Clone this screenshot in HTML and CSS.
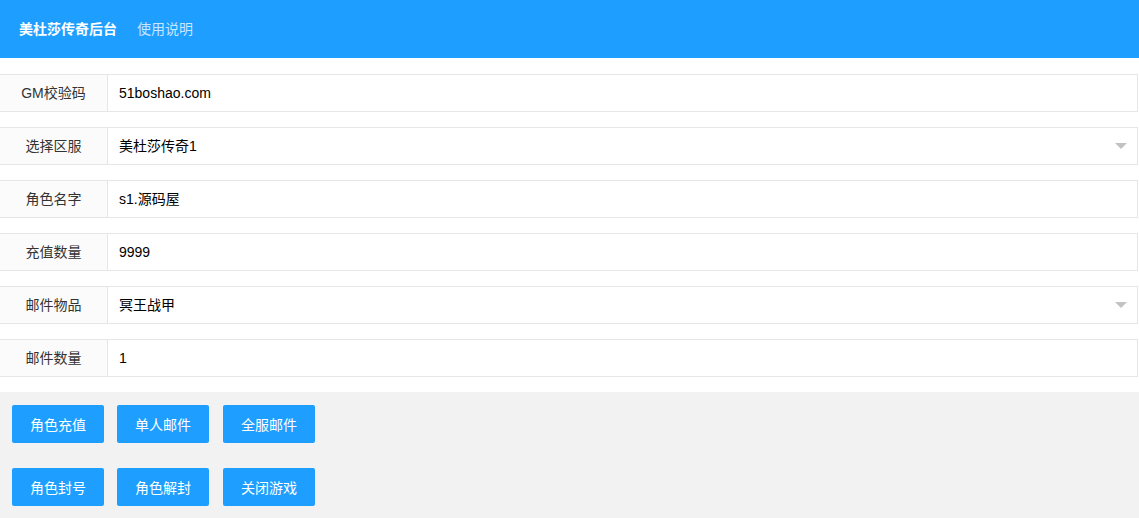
FILE: index.html
```html
<!DOCTYPE html>
<html lang="zh-CN">
<head>
<meta charset="utf-8">
<title>美杜莎传奇后台</title>
<link rel="stylesheet" href="styles.css">
</head>
<body>
<header class="topbar">
  <span class="brand">美杜莎传奇后台</span>
  <a class="nav-link">使用说明</a>
</header>
<main class="form">
  <div class="row"><label class="label">GM校验码</label><div class="field">51boshao.com</div></div>
  <div class="row"><label class="label">选择区服</label><div class="field select">美杜莎传奇1<span class="caret"></span></div></div>
  <div class="row"><label class="label">角色名字</label><div class="field">s1.源码屋</div></div>
  <div class="row"><label class="label">充值数量</label><div class="field">9999</div></div>
  <div class="row"><label class="label">邮件物品</label><div class="field select">冥王战甲<span class="caret"></span></div></div>
  <div class="row"><label class="label">邮件数量</label><div class="field">1</div></div>
</main>
<section class="actions">
  <div class="btn-row">
    <button class="btn">角色充值</button>
    <button class="btn">单人邮件</button>
    <button class="btn">全服邮件</button>
  </div>
  <div class="btn-row">
    <button class="btn">角色封号</button>
    <button class="btn">角色解封</button>
    <button class="btn">关闭游戏</button>
  </div>
</section>
</body>
</html>
```
FILE: styles.css
```css
html, body {
  margin: 0;
  padding: 0;
  background: #fff;
  font-family: "Liberation Sans", "Noto Sans CJK SC", sans-serif;
  font-size: 14px;
  color: #333;
}
.topbar {
  height: 58px;
  background: #1E9FFF;
  display: flex;
  align-items: center;
  padding-left: 19px;
  box-sizing: border-box;
}
.brand {
  color: #fff;
  font-weight: bold;
  font-size: 14px;
  line-height: 20px;
}
.nav-link {
  color: rgba(255,255,255,0.75);
  font-size: 14px;
  line-height: 20px;
  margin-left: 20px;
}
.form {
  padding: 16px 1px 15px 0;
  display: flex;
  flex-direction: column;
  gap: 15px;
}
.row {
  display: flex;
  height: 38px;
  box-sizing: border-box;
  border: 1px solid #e6e6e6;
  border-left: none;
}
.label {
  width: 107px;
  flex: none;
  background: #fbfbfb;
  border-right: 1px solid #e6e6e6;
  text-align: center;
  line-height: 36px;
  color: #333;
}
.field {
  flex: 1;
  position: relative;
  padding-left: 11px;
  line-height: 36px;
  color: #000;
}
.caret {
  position: absolute;
  right: 10px;
  top: 15px;
  width: 0;
  height: 0;
  border-left: 6px solid transparent;
  border-right: 6px solid transparent;
  border-top: 6px solid #c2c2c2;
}
.actions {
  background: #f2f2f2;
  padding: 13px 12px 12px;
  display: flex;
  flex-direction: column;
  gap: 25px;
}
.btn-row {
  display: flex;
  gap: 13px;
}
.btn {
  height: 38px;
  width: 92px;
  border: none;
  border-radius: 2px;
  background: #1E9FFF;
  color: #fff;
  font-family: inherit;
  font-size: 14px;
  padding: 0;
  cursor: pointer;
}
.btn-row .btn:nth-child(3) { margin-left: 1px; }
```
